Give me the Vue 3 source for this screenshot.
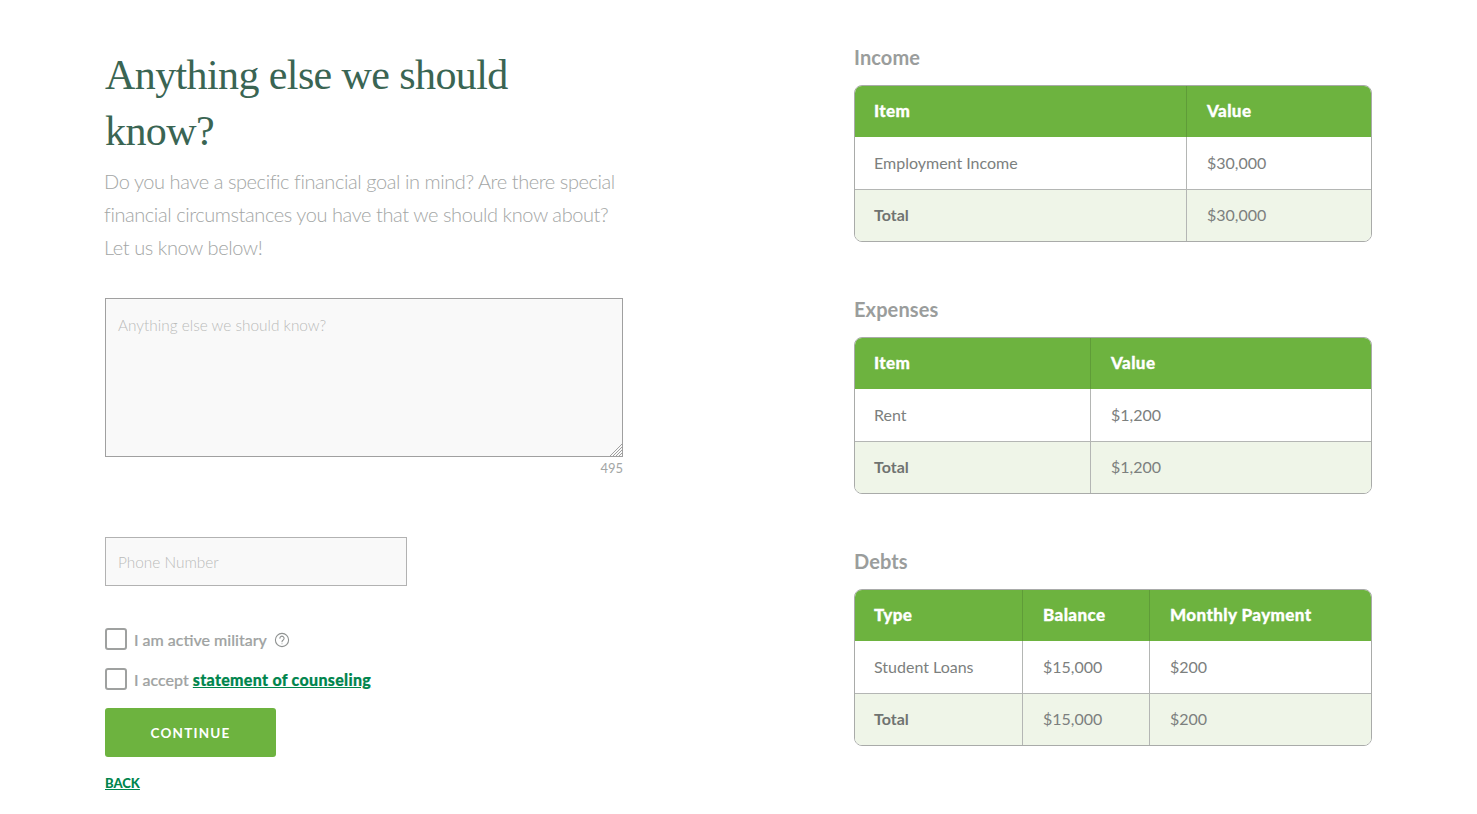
<template>
  <div class="page">
    <section class="form-col">
      <h1 class="title">Anything else we should know?</h1>
      <p class="lead">
        Do you have a specific financial goal in mind? Are there special financial circumstances you have that we should know about?<br />Let us know below!
      </p>
      <div class="notes-wrap">
        <textarea class="notes" placeholder="Anything else we should know?"></textarea>
        <svg class="grip" viewBox="0 0 12 12" stroke="#a0a0a0" stroke-width="1">
          <path d="M0 12 12 0M3 12l9-9M6 12l6-6M9 12l3-3"></path>
        </svg>
      </div>
      <div class="count">495</div>
      <input class="phone" type="text" placeholder="Phone Number" />
      <label class="check first">
        <input type="checkbox" />
        <span>I am active military</span>
        <svg class="help" viewBox="0 0 16 16" fill="none" stroke="currentColor" stroke-width="1.1">
          <circle cx="8" cy="8" r="6.6"></circle>
          <path d="M5.9 6.3a2.1 2.1 0 1 1 3.3 1.7c-.8.5-1.2.9-1.2 1.8" stroke-linecap="round"></path>
          <circle cx="8" cy="11.7" r=".5" fill="currentColor" stroke="none"></circle>
        </svg>
      </label>
      <label class="check second">
        <input type="checkbox" />
        <span>I accept <a class="link" href="#">statement of counseling</a></span>
      </label>
      <button class="continue" type="button">CONTINUE</button>
      <a class="back" href="#">BACK</a>
    </section>

    <section class="tables-col">
      <div v-for="t in tables" :key="t.title" class="block">
        <h2 class="block-title">{{ t.title }}</h2>
        <div class="table-wrap">
          <table>
            <colgroup>
              <col v-for="(w, i) in t.widths" :key="i" :style="{ width: w + 'px' }" />
            </colgroup>
            <thead>
              <tr><th v-for="h in t.head" :key="h">{{ h }}</th></tr>
            </thead>
            <tbody>
              <tr><td v-for="c in t.row" :key="c">{{ c }}</td></tr>
              <tr class="total"><td v-for="c in t.total" :key="c">{{ c }}</td></tr>
            </tbody>
          </table>
        </div>
      </div>
    </section>
  </div>
</template>

<script setup>
const tables = [
  {
    title: 'Income',
    widths: [331, 185],
    head: ['Item', 'Value'],
    row: ['Employment Income', '$30,000'],
    total: ['Total', '$30,000'],
  },
  {
    title: 'Expenses',
    widths: [235, 281],
    head: ['Item', 'Value'],
    row: ['Rent', '$1,200'],
    total: ['Total', '$1,200'],
  },
  {
    title: 'Debts',
    widths: [167, 127, 222],
    head: ['Type', 'Balance', 'Monthly Payment'],
    row: ['Student Loans', '$15,000', '$200'],
    total: ['Total', '$15,000', '$200'],
  },
]
</script>

<style>
html,
body {
  margin: 0;
  background: #ffffff;
}
</style>

<style scoped>
.page {
  display: flex;
  justify-content: space-between;
  box-sizing: border-box;
  width: 1477px;
  height: 814px;
  padding: 0 105px;
  overflow: hidden;
  font-family: Lato, "Liberation Sans", sans-serif;
}

.form-col {
  width: 518px;
  display: flex;
  flex-direction: column;
  align-items: flex-start;
  padding-top: 47px;
}

.title {
  margin: 0;
  width: 460px;
  font-family: "Liberation Serif", serif;
  font-size: 42px;
  line-height: 56px;
  font-weight: 400;
  letter-spacing: -0.6px;
  color: #3a6553;
}

.lead {
  margin: 6px 0 0 -1px;
  font-size: 20px;
  line-height: 33px;
  font-weight: 300;
  letter-spacing: -0.42px;
  color: #a3a6a5;
}

.notes-wrap {
  position: relative;
  width: 518px;
  height: 159px;
  margin-top: 34px;
}

.notes {
  display: block;
  box-sizing: border-box;
  width: 100%;
  height: 100%;
  padding: 17px 12px;
  background: #f9f9f9;
  border: 1px solid #a0a0a0;
  border-radius: 0;
  outline: none;
  resize: none;
  font-family: inherit;
  font-size: 15.4px;
  font-weight: 300;
}

.grip {
  position: absolute;
  right: 1px;
  bottom: 1px;
  width: 12px;
  height: 12px;
}

.notes::placeholder,
.phone::placeholder {
  color: #b9bbba;
  opacity: 1;
}

.count {
  width: 518px;
  margin-top: 3px;
  text-align: right;
  font-size: 13px;
  line-height: 16px;
  color: #a3a6a5;
}

.phone {
  display: block;
  box-sizing: border-box;
  width: 302px;
  height: 49px;
  margin-top: 61px;
  padding: 0 12px;
  background: #f9f9f9;
  border: 1px solid #b2b2b2;
  border-radius: 0;
  outline: none;
  font-family: inherit;
  font-size: 15.4px;
  font-weight: 300;
}

.check {
  display: flex;
  align-items: center;
  gap: 7px;
  font-size: 16px;
  line-height: 22px;
  font-weight: 500;
  color: #a0a3a2;
  -webkit-text-stroke: 0.2px #a0a3a2;
}

.check.first {
  margin-top: 42px;
}

.check.second {
  margin-top: 18px;
}

.check span,
.help {
  position: relative;
  top: 1px;
}

.check input {
  appearance: none;
  box-sizing: border-box;
  width: 22px;
  height: 22px;
  margin: 0;
  background: #ffffff;
  border: 2px solid #9fa1a0;
  border-radius: 3px;
}

.help {
  width: 16px;
  height: 16px;
  color: #8f9291;
}

.link {
  font-weight: 900;
  letter-spacing: 0.3px;
  -webkit-text-stroke: 0.2px #00854d;
  color: #00854d;
  text-decoration: underline;
}

.continue {
  width: 171px;
  height: 49px;
  margin-top: 18px;
  padding: 0;
  background: #6db33f;
  border: none;
  border-radius: 3px;
  color: #ffffff;
  font-family: inherit;
  font-size: 13.5px;
  font-weight: 700;
  letter-spacing: 1.2px;
}

.back {
  margin-top: 18px;
  font-size: 13px;
  line-height: 17px;
  font-weight: 900;
  color: #00854d;
  text-decoration: underline;
}

.tables-col {
  width: 518px;
  padding-top: 44px;
}

.block {
  height: 252px;
}

.block-title {
  margin: 0 0 15px;
  font-size: 20px;
  line-height: 26px;
  font-weight: 700;
  letter-spacing: 0.1px;
  color: #9a9d9c;
}

.table-wrap {
  box-sizing: border-box;
  height: 157px;
  border: 1px solid #a9aba9;
  border-radius: 8px;
  overflow: hidden;
}

table {
  width: 100%;
  height: 100%;
  table-layout: fixed;
  border-collapse: separate;
  border-spacing: 0;
}

th,
td {
  box-sizing: border-box;
  padding: 0 0 2px 20px;
  text-align: left;
  border-left: 1px solid #b4b6b4;
}

th:first-child,
td:first-child {
  padding-left: 19px;
  border-left: none;
}

th {
  height: 51px;
  background: #6db33f;
  border-left-color: #5f9c38;
  color: #ffffff;
  font-size: 17px;
  font-weight: 900;
  letter-spacing: 0.4px;
  -webkit-text-stroke: 0.3px #ffffff;
}

td {
  height: 52px;
  font-size: 16px;
  color: #7c807e;
}

.total td {
  background: #eff5e8;
  border-top: 1px solid #b4b6b4;
}

.total td:first-child {
  font-weight: 700;
  color: #6f7371;
}
</style>
